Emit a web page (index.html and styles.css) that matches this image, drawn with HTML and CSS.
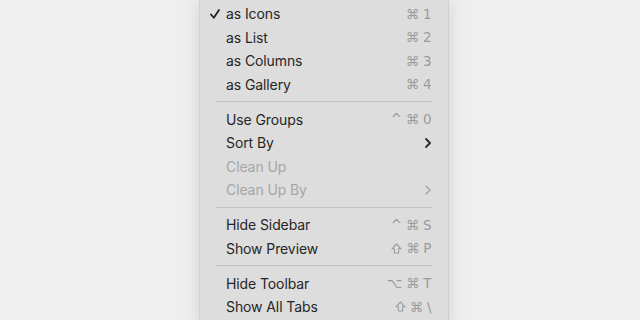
FILE: index.html
```html
<!DOCTYPE html>
<html lang="en">
<head>
    <meta charset="UTF-8">
    <title>View Menu</title>
    <link rel="stylesheet" href="styles.css">
</head>
<body>
    <div class="stage">
        <div class="menu">
            <div class="item">
                <span class="check"><svg width="10" height="10" viewBox="0 0 10 10"><path d="M1 5.5 L3.8 8.8 L9 1" fill="none" stroke="currentColor" stroke-width="1.7" stroke-linecap="round" stroke-linejoin="round"/></svg></span>
                <span class="label">as Icons</span><span class="keys">&#8984;&thinsp;1</span>
            </div>
            <div class="item"><span class="check"></span><span class="label">as List</span><span class="keys">&#8984;&thinsp;2</span></div>
            <div class="item"><span class="check"></span><span class="label">as Columns</span><span class="keys">&#8984;&thinsp;3</span></div>
            <div class="item"><span class="check"></span><span class="label">as Gallery</span><span class="keys">&#8984;&thinsp;4</span></div>
            <div class="separator"></div>
            <div class="item"><span class="check"></span><span class="label">Use Groups</span><span class="keys">^&thinsp;&#8984;&thinsp;0</span></div>
            <div class="item"><span class="check"></span><span class="label">Sort By</span><svg class="chevron" width="8" height="12" viewBox="0 0 8 12"><path d="M2 2 L6 6 L2 10" fill="none" stroke="currentColor" stroke-width="1.8" stroke-linecap="round" stroke-linejoin="round"/></svg></div>
            <div class="item disabled"><span class="check"></span><span class="label">Clean Up</span></div>
            <div class="item disabled"><span class="check"></span><span class="label">Clean Up By</span><svg class="chevron" width="8" height="12" viewBox="0 0 8 12"><path d="M2 2 L6 6 L2 10" fill="none" stroke="currentColor" stroke-width="1.5" stroke-linecap="round" stroke-linejoin="round"/></svg></div>
            <div class="separator"></div>
            <div class="item"><span class="check"></span><span class="label">Hide Sidebar</span><span class="keys">^&thinsp;&#8984;&thinsp;S</span></div>
            <div class="item">
                <span class="check"></span><span class="label">Show Preview</span>
                <span class="keys"><svg class="shift" width="11" height="11" viewBox="0 0 11 11"><path d="M5.5 1 L10 5.8 L7.6 5.8 L7.6 10 L3.4 10 L3.4 5.8 L1 5.8 Z" fill="none" stroke="currentColor" stroke-width="1.1" stroke-linejoin="round"/></svg>&thinsp;&#8984;&thinsp;P</span>
            </div>
            <div class="separator"></div>
            <div class="item"><span class="check"></span><span class="label">Hide Toolbar</span><span class="keys">&#8997;&thinsp;&#8984;&thinsp;T</span></div>
            <div class="item">
                <span class="check"></span><span class="label">Show All Tabs</span>
                <span class="keys"><svg class="shift" width="11" height="11" viewBox="0 0 11 11"><path d="M5.5 1 L10 5.8 L7.6 5.8 L7.6 10 L3.4 10 L3.4 5.8 L1 5.8 Z" fill="none" stroke="currentColor" stroke-width="1.1" stroke-linejoin="round"/></svg>&thinsp;&#8984;&thinsp;\</span>
            </div>
        </div>
    </div>
</body>
</html>
```

FILE: styles.css
```css
* {
    margin: 0;
    padding: 0;
    box-sizing: border-box;
}

body {
    width: 640px;
    height: 320px;
    overflow: hidden;
    background: #efefef;
    font-family: Inter, "Liberation Sans", "DejaVu Sans", sans-serif;
}

.stage {
    display: flex;
    padding-left: 199px;
}

.menu {
    width: 250px;
    height: 330px;
    padding: 2px 0 0;
    background: #dddddd;
    border-right: 1px solid #cfcfcf;
    border-left: 1px solid #d3d3d3;
    box-shadow: 0 0 18px rgba(0, 0, 0, 0.12);
}

.item {
    display: flex;
    align-items: center;
    height: 23.5px;
    padding: 0 16px 0 10px;
    font-size: 14px;
    color: #262626;
}

.check {
    display: flex;
    align-items: center;
    width: 16px;
    color: #1e1e1e;
}

.label {
    flex: 1;
    letter-spacing: -0.1px;
}

.keys {
    display: flex;
    align-items: center;
    color: #9b9b9b;
    font-size: 13.5px;
    font-family: "DejaVu Sans", sans-serif;
    letter-spacing: 0.5px;
}

.shift {
    margin-right: 1px;
}

.chevron {
    color: #2a2a2a;
}

.disabled {
    color: #a6a6a6;
}

.disabled .chevron {
    color: #a6a6a6;
}

.separator {
    height: 1px;
    margin: 5.25px 16px;
    background: #c4c4c4;
}
```
